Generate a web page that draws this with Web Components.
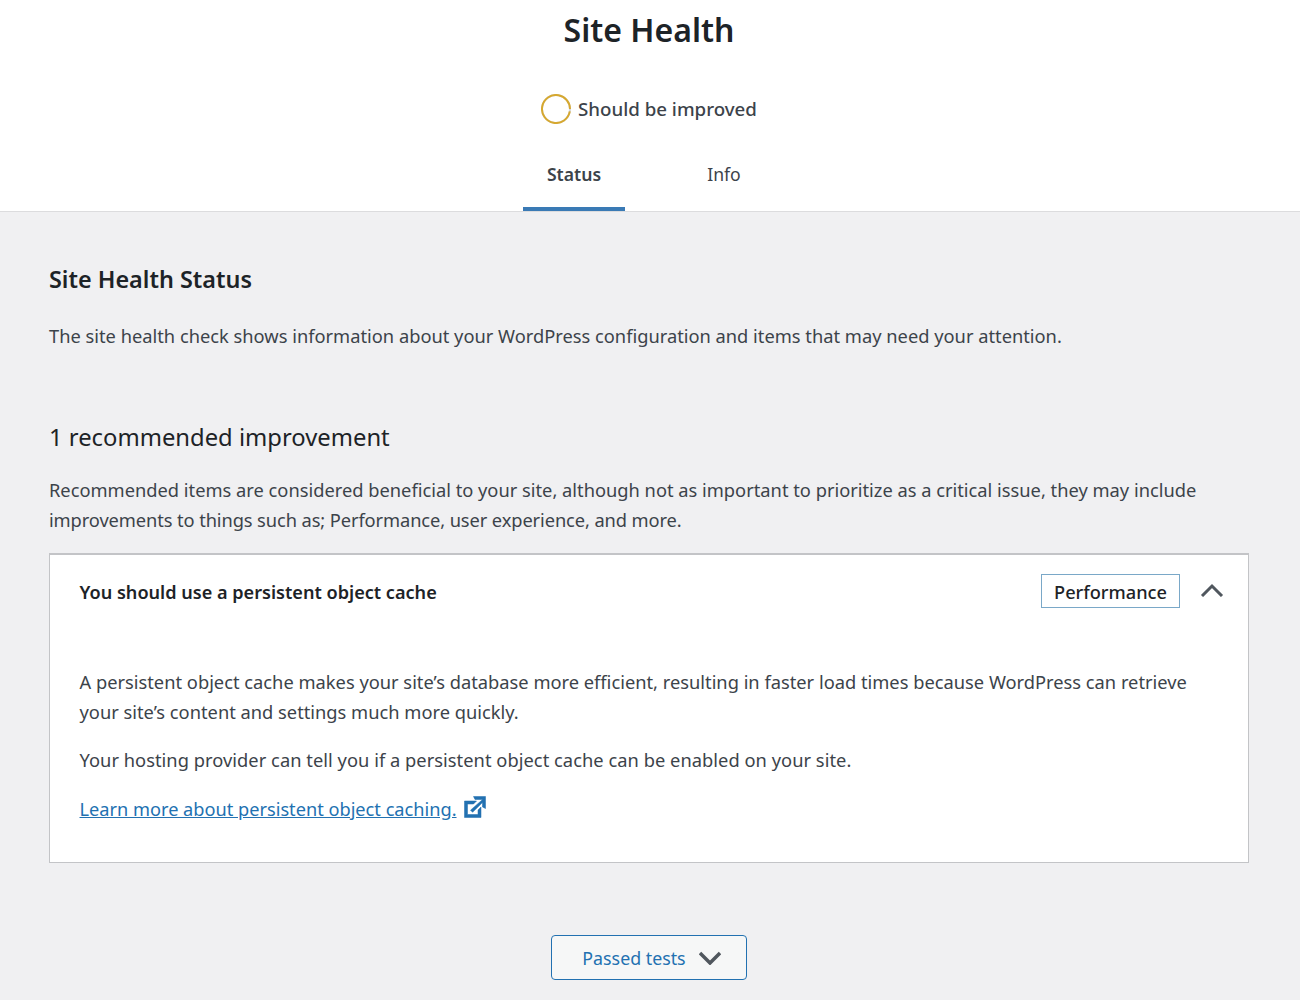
<!DOCTYPE html>
<html lang="en"><head><meta charset="utf-8"><title>Site Health</title>
<style>
html,body{margin:0;padding:0;height:1000px;overflow:hidden;background:#f0f0f2;color:#3c434a;font-family:"Noto Sans","Open Sans",sans-serif;font-size:18.3px;}
</style></head><body>
<sh-header></sh-header>
<sh-content></sh-content>
<script>
function def(name,html){customElements.define(name,class extends HTMLElement{constructor(){super();this.attachShadow({mode:'open'}).innerHTML=html;}});}
def('sh-header',`<style>
:host{display:block;background:#fff;border-bottom:1px solid #dcdcde;height:211px;text-align:center}
h1{margin:0;height:60px;line-height:60px;font-size:32px;font-weight:600;color:#1d2327;padding-right:2px;}
.st{display:flex;justify-content:center;align-items:center;gap:7px;height:30px;margin-top:34px;font-weight:500;font-size:18.7px;color:#3c434a;padding-right:2px}
.st span{position:relative;top:-1px}
svg{display:block}
nav{display:flex;justify-content:center;margin-top:20px;height:67px;padding-right:2px}
a{display:block;box-sizing:border-box;height:67px;line-height:60px;color:#3c434a;width:102px;font-size:17.6px}
a.on{font-weight:600;border-bottom:4px solid #3a7ab5;margin-right:48px;}
</style>
<h1>Site Health</h1>
<div class="st"><svg width="30" height="30" viewBox="0 0 30 30"><circle cx="15" cy="15" r="14" fill="none" stroke="#d8d8da" stroke-width="2"/><circle cx="15" cy="15" r="14" fill="none" stroke="#d6a82f" stroke-width="2" stroke-dasharray="85 88" transform="rotate(-90 15 15) rotate(100 15 15)"/></svg><span>Should be improved</span></div>
<nav><a class="on">Status</a><a>Info</a></nav>`);
def('sh-acc',`<style>
:host{display:block;background:#fff;border:1px solid #c3c4c7;border-top-width:2px;margin-top:18px}
.h{display:flex;align-items:center;padding:19px 24px 0 29.500px;height:34px;}
.t{flex:1;font-weight:600;color:#1d2327;font-size:18.100px;position:relative;top:1px}
.b{box-sizing:border-box;height:34px;line-height:34px;width:139px;text-align:center;border:1px solid #7aa8c8;color:#1d2327;font-weight:500;font-size:18.200px}
.h svg{margin-left:20px;display:block;margin-top:-2px}
.c{padding:59px 30px 0 29.500px;height:195px}
p{margin:0 0 18px;line-height:30px;}
a{color:#2271b1;text-decoration:underline;}
.l{display:flex;align-items:flex-start;padding-top:1px;font-size:18.200px}
.l svg{flex:none;margin:-2px 0 0 3px}
.w{letter-spacing:.035px}
</style>
<div class="h"><div class="t">You should use a persistent object cache</div><div class="b">Performance</div>
<svg width="24" height="14" viewBox="0 0 24 14"><path d="M2 13 12 3l10 10" fill="none" stroke="#50575e" stroke-width="3"/></svg></div>
<div class="c"><p>A persistent object cache makes your site’s database more efficient, resulting in faster load times because WordPress can retrieve your site’s content and settings much more quickly.</p>
<p class="w">Your hosting provider can tell you if a persistent object cache can be enabled on your site.</p>
<p class="l"><a>Learn more about persistent object caching.</a>
<svg width="30" height="30" viewBox="0 0 20 20"><path fill="#2271b1" stroke="#2271b1" stroke-width=".35" d="M9 3h8v8l-2-1V6.920l-6.600 6.600-1.400-1.400L15.080 5H10zm3 12v-3l2-2v7H3V6h8L9 8H5v7h7z"/></svg></p></div>`);
def('sh-content',`<style>
:host{display:block;padding:0 51px 0 49px}
h2{margin:0;padding-top:51px;height:32px;line-height:32px;font-size:23.400px;font-weight:600;color:#1d2327}
p{margin:0;line-height:30px}
.d{margin-top:26px}
h3{margin:68px 0 0;font-size:23.800px;font-weight:400;color:#1d2327;line-height:36px;height:36px}
.r{margin-top:20px}
.r span{letter-spacing:-.1px}
button{display:flex;align-items:center;justify-content:center;gap:13px;margin:72px auto 0;width:196px;height:45px;box-sizing:border-box;background:#f6f7f7;border:1px solid #2271b1;border-radius:4px;color:#2271b1;font:inherit;font-size:17.800px;padding:0 0 0 5px}
button svg{display:block}
</style>
<h2>Site Health Status</h2>
<p class="d">The site health check shows information about your WordPress configuration and items that may need your attention.</p>
<h3>1 recommended improvement</h3>
<p class="r">Recommended items are considered beneficial to your site, although not as important to prioritize as a critical issue, they may include <span>improvements to things such as; Performance, user experience, and more.</span></p>
<sh-acc></sh-acc>
<button>Passed tests <svg width="22" height="14" viewBox="0 0 22 14"><path d="M1 2 11 12 21 2" fill="none" stroke="#50575e" stroke-width="3.500"/></svg></button>`);
</script>
</body></html>
